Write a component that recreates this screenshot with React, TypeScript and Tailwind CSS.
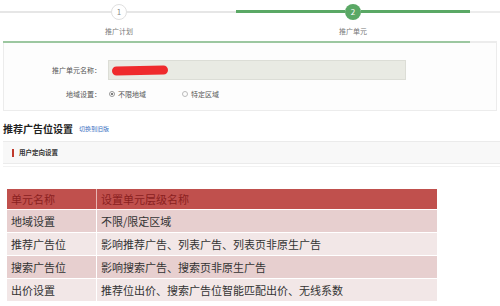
import React from 'react';

const rows = [
  { name: '地域设置', desc: '不限/限定区域' },
  { name: '推荐广告位', desc: '影响推荐广告、列表广告、列表页非原生广告' },
  { name: '搜索广告位', desc: '影响搜索广告、搜索页非原生广告' },
  { name: '出价设置', desc: '推荐位出价、搜索广告位智能匹配出价、无线系数' },
];

const App = () => {
  return (
    <div
      className="w-[500px] h-[306px] bg-white overflow-hidden text-[#333]"
      style={{ fontFamily: '"Noto Sans CJK SC", "Noto Sans", sans-serif' }}
    >
      {/* Steps */}
      <div className="flex items-center h-[21px] pt-[2px]">
        <div className="w-[111px] h-[2px] bg-[#e6e6e6]" />
        <div className="w-[16px] h-[16px] rounded-full bg-white border border-[#e0e0e0] flex items-center justify-center text-[8px] text-[#888] leading-none">
          1
        </div>
        <div className="w-[109px] h-[2px] bg-[#e6e6e6]" />
        <div className="w-[109px] h-[3px] bg-[#5aa865]" />
        <div className="w-[16px] h-[16px] rounded-full bg-[#5aa865] flex items-center justify-center text-[8px] text-white leading-none">
          2
        </div>
        <div className="w-[109px] h-[3px] bg-[#5aa865]" />
        <div className="flex-1 h-[2px] bg-[#ececec]" />
      </div>
      <div className="flex h-[20px] items-center text-[7px] text-[#777]">
        <div className="w-[238px] text-center">推广计划</div>
        <div className="w-[230px] text-center">推广单元</div>
      </div>

      {/* Form box */}
      <div className="flex h-[2px] mx-[3px]">
        <div className="w-[467px] bg-[#9cc7a0]" />
        <div className="flex-1 bg-[#ececec]" />
      </div>
      <div className="mx-[3px] h-[68px] border border-t-0 border-[#ececec] bg-[#fdfdfd] flex flex-col pt-[17px]">
        <div className="flex items-center h-[20px]">
          <div className="w-[99px] text-right text-[7px] text-[#555] pr-[2px]">推广单元名称：</div>
          <div className="ml-[5px] w-[298px] h-[20px] bg-[#e9eae3] border border-[#dcddd6] flex items-center pl-[3px]">
            <div className="w-[56px] h-[9px] rounded-full bg-[#ef2a2c] -rotate-1" />
          </div>
        </div>
        <div className="flex items-center h-[14px] mt-[7px] text-[7px] text-[#555]">
          <div className="w-[99px] text-right pr-[2px]">地域设置：</div>
          <div className="ml-[6px] flex items-center gap-[3px]">
            <div className="w-[6px] h-[6px] rounded-full border border-[#999] flex items-center justify-center">
              <div className="w-[2px] h-[2px] rounded-full bg-[#555]" />
            </div>
            <span>不限地域</span>
          </div>
          <div className="ml-[36px] flex items-center gap-[3px]">
            <div className="w-[6px] h-[6px] rounded-full border border-[#bbb]" />
            <span>特定区域</span>
          </div>
        </div>
      </div>

      {/* Section heading */}
      <div className="flex items-center h-[30px] pl-[3px] pt-[4px]">
        <span className="text-[10px] font-bold text-[#222]">推荐广告位设置</span>
        <span className="ml-[6px] text-[6px] text-[#3b6fc2]">切换到旧版</span>
      </div>
      <div className="ml-[3px] h-[23px] bg-[#f8f8f8] border-y border-[#ebebeb] flex items-center pl-[9px]">
        <div className="w-[2px] h-[8px] bg-[#c0392b]" />
        <span className="ml-[5px] text-[6.5px] font-bold text-[#333]">用户定向设置</span>
      </div>
      <div className="ml-[3px] h-[3px] border-b border-[#f2f2f2]" />

      {/* Table */}
      <div className="ml-[7px] mt-[22px] w-[430px] flex flex-col gap-[1px] text-[11px] leading-none">
        <div className="flex h-[20px] bg-[#c0504d] text-[#8a1f1f]">
          <div className="w-[90px] flex items-center pl-[4px] border-r border-[#e8b5b3]">单元名称</div>
          <div className="flex-1 flex items-center pl-[4px]">设置单元层级名称</div>
        </div>
        {rows.map((row, i) => (
          <div
            key={row.name}
            className={`flex h-[22px] ${i % 2 === 0 ? 'bg-[#e7cfcf]' : 'bg-[#f2e7e7]'} text-[#333]`}
          >
            <div className="w-[90px] flex items-center pl-[4px] border-r border-white">{row.name}</div>
            <div className="flex-1 flex items-center pl-[4px]">{row.desc}</div>
          </div>
        ))}
      </div>
    </div>
  );
};

export default App;
